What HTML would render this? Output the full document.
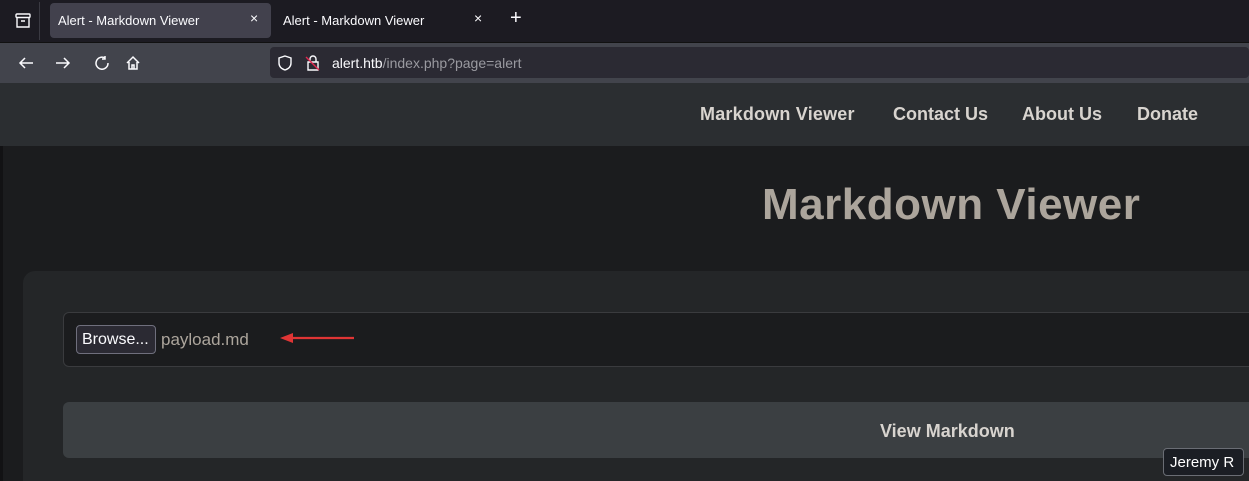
<!DOCTYPE html>
<html style="width:1249px;height:481px;overflow:hidden"><head><style>
*{margin:0;padding:0;box-sizing:border-box}
body{width:1249px;height:481px;overflow:hidden;background:#1b1c1e;font-family:"Liberation Sans",sans-serif;position:relative}
.abs{position:absolute}
</style></head><body>
<div class="abs" style="left:0;top:0;width:1249px;height:42px;background:#1c1b22"></div>
<div class="abs" style="left:39px;top:2px;width:1px;height:38px;background:#3a3a42"></div>
<svg class="abs" style="left:14px;top:12px" width="18" height="18" viewBox="0 0 18 18" fill="none" stroke="#fbfbfe" stroke-width="1.4"><rect x="2" y="2" width="14" height="3.5" rx="1"/><path d="M3 5.5v9.5h12V5.5M7 9h4"/></svg>
<div class="abs" style="left:50px;top:3px;width:221px;height:35px;background:#42414d;border-radius:4px"></div>
<div class="abs" style="left:58px;top:13px;font-size:13px;color:#fbfbfe">Alert - Markdown Viewer</div>
<div class="abs" style="left:250px;top:10px;font-size:14px;color:#fbfbfe">×</div>
<div class="abs" style="left:283px;top:13px;font-size:13px;color:#fbfbfe">Alert - Markdown Viewer</div>
<div class="abs" style="left:474px;top:10px;font-size:14px;color:#fbfbfe">×</div>
<div class="abs" style="left:510px;top:7px;font-size:20px;color:#fbfbfe">+</div>
<div class="abs" style="left:0;top:42px;width:1249px;height:41px;background:#42444c;border-top:1px solid #111"></div>
<svg class="abs" style="left:16px;top:53px" width="140" height="20" viewBox="0 0 140 20" fill="none" stroke="#fbfbfe" stroke-width="1.5"><path d="M4 10h13M9 5l-5 5 5 5"/><path d="M40 10h13M48 5l5 5-5 5"/><path d="M89 5a6 6 0 1 0 3 5M89 3v3h-3"/><path d="M111 10l6-6 6 6M113 9v7h8V9M116 16v-4h2v4"/></svg>
<div class="abs" style="left:270px;top:47px;width:979px;height:31px;background:#2b2a33;border-radius:4px"></div>
<svg class="abs" style="left:277px;top:54px" width="44" height="18" viewBox="0 0 44 18" fill="none" stroke="#fbfbfe" stroke-width="1.4"><path d="M8 2l6 2v5c0 4-3 6-6 7-3-1-6-3-6-7V4z"/><path d="M33 8V5a3 3 0 0 1 6 0v3M31 8h10v8H31z"/><path d="M29 3l13 13" stroke="#e22850"/></svg>
<div class="abs" style="left:332px;top:55px;font-size:14px;color:#fbfbfe">alert.htb<span style="color:#9a9aa0">/index.php?page=alert</span></div>
<div class="abs" style="left:0;top:83px;width:1249px;height:63px;background:#2b2e31"></div>
<div class="abs" style="left:0;top:146px;width:3px;height:335px;background:#121214"></div>
<div class="abs" style="left:700px;top:104px;font-size:18px;font-weight:bold;color:#d8d4cf;letter-spacing:0.2px">Markdown Viewer</div>
<div class="abs" style="left:893px;top:104px;font-size:18px;font-weight:bold;color:#d8d4cf">Contact Us</div>
<div class="abs" style="left:1022px;top:104px;font-size:18px;font-weight:bold;color:#d8d4cf">About Us</div>
<div class="abs" style="left:1137px;top:104px;font-size:18px;font-weight:bold;color:#d8d4cf">Donate</div>
<div class="abs" style="left:762px;top:180px;font-size:44px;font-weight:bold;color:#aca59c;letter-spacing:0.5px">Markdown Viewer</div>
<div class="abs" style="left:23px;top:271px;width:1240px;height:230px;background:#242628;border-radius:12px"></div>
<div class="abs" style="left:63px;top:312px;width:1200px;height:55px;background:#1b1c1e;border:1px solid #3a3b3e;border-radius:6px"></div>
<div class="abs" style="left:76px;top:325px;width:80px;height:29px;background:#2b2a33;border:1px solid #6f6f7d;border-radius:4px;font-size:16px;color:#fbfbfe;padding:5px 0 0 5px">Browse...</div>
<div class="abs" style="left:161px;top:330px;font-size:17px;color:#aca59c">payload.md</div>
<svg class="abs" style="left:278px;top:331px" width="78" height="14" viewBox="0 0 78 14"><path d="M12 7h64" stroke="#e03535" stroke-width="2.2"/><path d="M2 7l13-5v10z" fill="#e03535"/></svg>
<div class="abs" style="left:63px;top:402px;width:1200px;height:56px;background:#3b3f42;border-radius:6px"></div>
<div class="abs" style="left:880px;top:421px;font-size:18px;font-weight:bold;color:#d8d4cf">View Markdown</div>
<div class="abs" style="left:1163px;top:448px;width:81px;height:28px;background:#1b1e24;border:1px solid #6a6d74;border-radius:4px;font-size:15px;color:#fff;padding:5px 0 0 6px">Jeremy R</div>
</body></html>
